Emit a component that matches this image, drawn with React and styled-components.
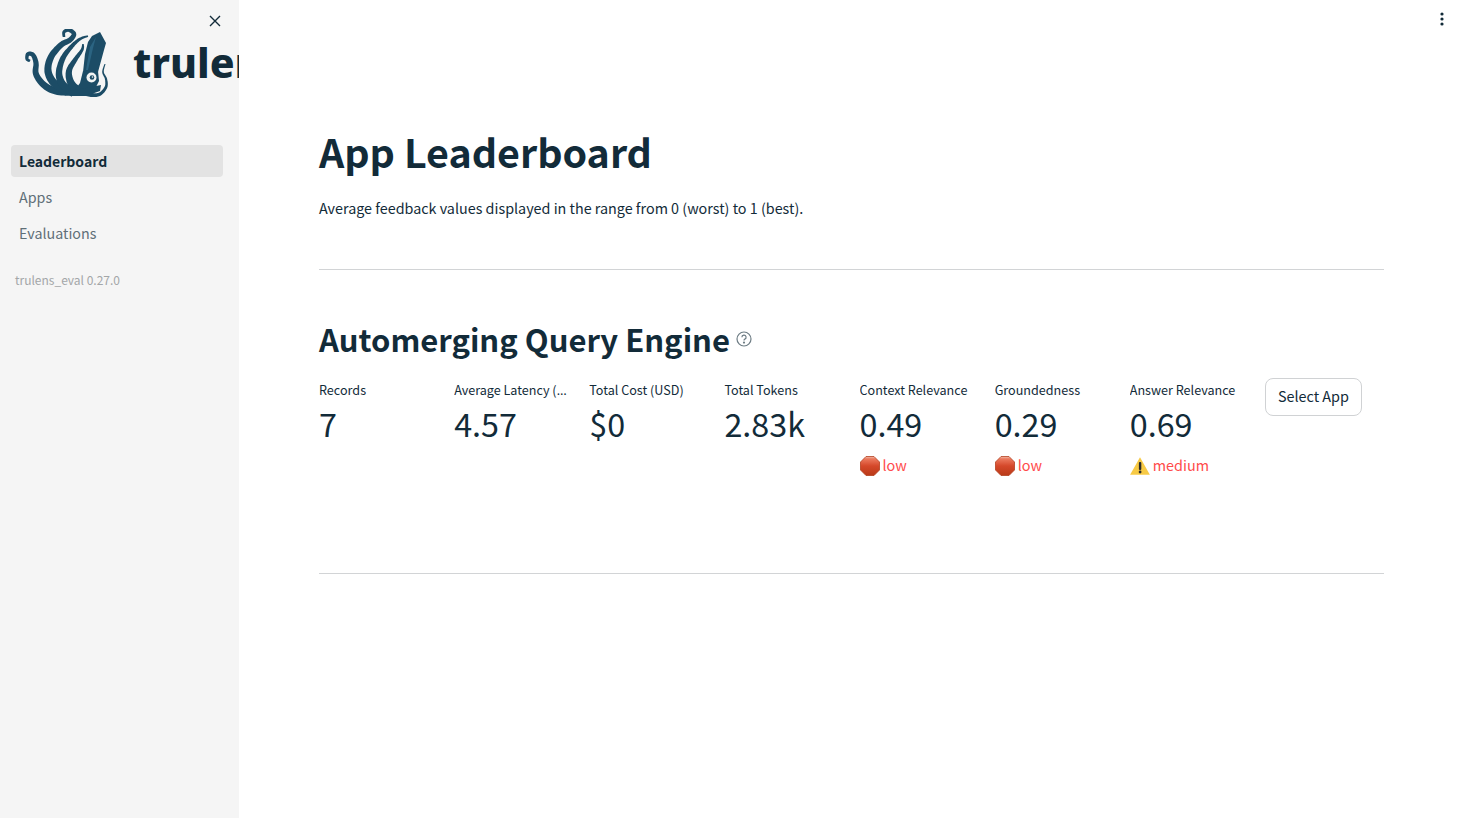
import { createGlobalStyle, styled } from "styled-components";

const FONT = `"Noto Sans CJK KR", "Noto Sans", sans-serif`;
const INK = "#122b39";

const Global = createGlobalStyle`
  html, body { margin: 0; padding: 0; height: 100%; background: #fff; }
  body { font-family: ${FONT}; color: ${INK}; overflow: hidden; }
  * { box-sizing: border-box; }
`;

const Page = styled.div`
  display: flex;
  height: 818px;
  width: 1458px;
`;

/* Sidebar */
const Sidebar = styled.aside`
  position: relative;
  width: 239px;
  flex: none;
  background: #f5f5f5;
  overflow: hidden;
`;
const CloseBtn = styled.button`
  position: absolute;
  top: 14px;
  left: 208px;
  width: 14px;
  height: 14px;
  padding: 0;
  border: 0;
  background: none;
  display: flex;
  color: ${INK};
`;
const Brand = styled.div`
  display: flex;
  align-items: center;
  height: 145px;
  padding: 0 0 15px 24px;
  white-space: nowrap;
  svg {
    flex: none;
  }
`;
const BrandName = styled.span`
  margin: 0 0 6px 19px;
  font-family: "Noto Sans", sans-serif;
  font-size: 41px;
  font-weight: 800;
  line-height: 1;
  color: ${INK};
`;
const Nav = styled.nav`
  display: flex;
  flex-direction: column;
  gap: 4px;
  padding: 0 16px 0 11px;
`;
const NavItem = styled.a`
  height: 32px;
  padding: 0 8px ${(p) => (p.$active ? 0 : 2)}px;
  border-radius: 4px;
  display: flex;
  align-items: center;
  font-size: ${(p) => (p.$active ? 14 : 14.3)}px;
  font-weight: ${(p) => (p.$active ? 700 : 400)};
  color: ${(p) => (p.$active ? INK : "#5f6f78")};
  background: ${(p) => (p.$active ? "#e3e3e3" : "transparent")};
`;
const Version = styled.div`
  margin: 22px 0 0 15px;
  font-size: 12px;
  line-height: 18px;
  color: #a3a6a8;
`;

/* Main */
const Main = styled.main`
  position: relative;
  flex: 1;
  padding: 122px 74px 0 80px;
`;
const MenuBtn = styled.button`
  position: absolute;
  top: 11px;
  right: 8px;
  width: 16px;
  height: 16px;
  padding: 0;
  border: 0;
  background: none;
  display: flex;
  color: ${INK};
`;
const Title = styled.h1`
  margin: 0;
  font-size: 39.4px;
  font-weight: 700;
  line-height: 58px;
`;
const Caption = styled.p`
  margin: 16px 0 0;
  font-size: 14.35px;
  line-height: 24px;
`;
const Rule = styled.hr`
  margin: ${(p) => p.$top}px 0 0;
  border: 0;
  border-top: 1px solid #d2d4d6;
`;
const AppTitle = styled.h2`
  display: flex;
  align-items: center;
  margin: 45px 0 0;
  font-size: 31px;
  font-weight: 700;
  line-height: 48px;
`;
const HelpIcon = styled.span`
  display: flex;
  margin: 0 0 0 6px;
  color: #6d7c84;
`;
const Metrics = styled.div`
  display: grid;
  grid-template-columns: repeat(8, 1fr);
  column-gap: 16px;
  margin-top: 15px;
`;
const Metric = styled.div`
  min-width: 0;
`;
/* the ellipsis takes the label's own font, so keep a baseline "…" there */
const MetricLabel = styled.div`
  font-family: "Noto Sans", sans-serif;
  font-size: 12.6px;
  line-height: 20px;
  padding-top: 2px;
  white-space: nowrap;
  overflow: hidden;
  text-overflow: ellipsis;
`;
const LabelText = styled.span`
  font-family: ${FONT};
`;
const MetricValue = styled.div`
  font-size: 32.3px;
  line-height: 48px;
  margin-top: -2px;
`;
const Delta = styled.div`
  display: flex;
  align-items: center;
  gap: 3px;
  height: 24px;
  margin-top: 5px;
  font-size: 14.4px;
  color: #ff4b4b;
  svg {
    margin-top: 3px;
  }
`;
const SelectBtn = styled.button`
  justify-self: start;
  height: 38px;
  padding: 0 12px 3px;
  border: 1px solid #d0d2d4;
  border-radius: 8px;
  background: #fff;
  font: 400 14.4px ${FONT};
  color: ${INK};
  white-space: nowrap;
`;

/* Turns a spline through pts into a filled shape that narrows from w0 to w1 */
function tentacle(pts, w0, w1) {
  const samples = [];
  for (let i = 0; i < pts.length - 1; i++) {
    const p0 = pts[Math.max(i - 1, 0)];
    const p1 = pts[i];
    const p2 = pts[i + 1];
    const p3 = pts[Math.min(i + 2, pts.length - 1)];
    for (let s = 0; s < 10; s++) {
      const t = s / 10;
      const f = (a, b, c, d) =>
        0.5 * (2 * b + (c - a) * t + (2 * a - 5 * b + 4 * c - d) * t * t + (3 * b - a - 3 * c + d) * t * t * t);
      samples.push([f(p0[0], p1[0], p2[0], p3[0]), f(p0[1], p1[1], p2[1], p3[1])]);
    }
  }
  samples.push(pts[pts.length - 1]);
  const left = [];
  const right = [];
  samples.forEach((p, i) => {
    const a = samples[Math.max(i - 1, 0)];
    const b = samples[Math.min(i + 1, samples.length - 1)];
    const len = Math.hypot(b[0] - a[0], b[1] - a[1]) || 1;
    const w = (w0 + (w1 - w0) * (i / (samples.length - 1))) / 2;
    const nx = (-(b[1] - a[1]) / len) * w;
    const ny = ((b[0] - a[0]) / len) * w;
    left.push(`${(p[0] + nx).toFixed(1)} ${(p[1] + ny).toFixed(1)}`);
    right.unshift(`${(p[0] - nx).toFixed(1)} ${(p[1] - ny).toFixed(1)}`);
  });
  return `M${left.join("L")}L${right.join("L")}Z`;
}

const ARMS = [
  { pts: [[54, 72], [36, 71], [24, 65], [16, 54], [16, 43], [13, 35], [8, 34], [7, 39], [10, 41]], w0: 8, w1: 2.5 },
  { pts: [[48, 72], [34, 63], [28, 51], [31, 37], [41, 25], [50, 20], [54, 14], [49, 10], [44, 12], [44, 17]], w0: 8.5, w1: 2.5 },
  { pts: [[54, 73], [43, 65], [39, 53], [43, 38], [52, 26], [60, 19], [68, 16]], w0: 9, w1: 1.5 },
  { pts: [[60, 73], [51, 63], [49, 51], [55, 40], [62, 30], [63, 24]], w0: 9, w1: 1.5 },
  { pts: [[62, 73], [72, 75], [80, 74], [86, 67], [86, 59], [83, 52], [85, 44]], w0: 4.5, w1: 1 },
];

const Squid = () => (
  <svg width="90" height="72" viewBox="4 9 90 72" fill="#1c4c66">
    {ARMS.map((a, i) => (
      <path key={i} d={tentacle(a.pts, a.w0, a.w1)} />
    ))}
    <path d="M80 12 L86 23 L84 30 L78 52 L63 52 L65 34 L68 22 L72 16 Z" />
    <path d="M76 17 L70 27 L66 50 L68 50 L73 28 Z" fill="#2b6482" />
    <path d="M63 51 L78 51 L79 61 L75 69 L68 74 L58 75 L54 71 L60 63 Z" />
    <path d="M48 71 L66 68 L81 65 L80 71 L66 76 L52 76 Z" />
    <circle cx="71.5" cy="57.5" r="5" fill="#f2f4f4" />
    <circle cx="72" cy="57.5" r="2.3" fill="#1c4c66" />
    <circle cx="72.5" cy="57" r="0.8" fill="#f2f4f4" />
  </svg>
);

const StopSign = () => (
  <svg width="20" height="20" viewBox="0 0 20 20">
    <defs>
      <linearGradient id="stop" x1="0" y1="0" x2="0" y2="1">
        <stop offset="0" stopColor="#f0c0b0" />
        <stop offset="0.12" stopColor="#ec7a5e" />
        <stop offset="0.5" stopColor="#d5482a" />
        <stop offset="1" stopColor="#b93a18" />
      </linearGradient>
    </defs>
    <path d="M6 .5 H14 L19.5 6 V14 L14 19.5 H6 L.5 14 V6 Z" fill="url(#stop)" stroke="#b4401f" strokeWidth="0.8" />
  </svg>
);

const WarnSign = () => (
  <svg width="20" height="18" viewBox="0 0 20 18">
    <path d="M10 .3 L19.9 17.7 H.1 Z" fill="#f7ca45" />
    <rect x="8.9" y="5" width="2.4" height="8" rx="1" fill="#2b2b2b" />
    <circle cx="10.1" cy="15" r="1.4" fill="#2b2b2b" />
  </svg>
);

const METRICS = [
  { label: "Records", value: "7" },
  { label: "Average Latency (Seconds)", value: "4.57" },
  { label: "Total Cost (USD)", value: "$0" },
  { label: "Total Tokens", value: "2.83k" },
  { label: "Context Relevance", value: "0.49", delta: "low" },
  { label: "Groundedness", value: "0.29", delta: "low" },
  { label: "Answer Relevance", value: "0.69", delta: "medium" },
];

export default function App() {
  return (
    <Page>
      <Global />
      <Sidebar>
        <CloseBtn aria-label="Close sidebar">
          <svg width="14" height="14" viewBox="0 0 14 14" fill="none" stroke="currentColor" strokeWidth="1.4">
            <path d="M2 2 L12 12 M12 2 L2 12" />
          </svg>
        </CloseBtn>
        <Brand>
          <Squid />
          <BrandName>trulens</BrandName>
        </Brand>
        <Nav>
          <NavItem $active>Leaderboard</NavItem>
          <NavItem>Apps</NavItem>
          <NavItem>Evaluations</NavItem>
        </Nav>
        <Version>trulens_eval 0.27.0</Version>
      </Sidebar>
      <Main>
        <MenuBtn aria-label="Menu">
          <svg width="16" height="16" viewBox="0 0 16 16" fill="currentColor">
            <circle cx="8" cy="3" r="1.6" />
            <circle cx="8" cy="8" r="1.6" />
            <circle cx="8" cy="13" r="1.6" />
          </svg>
        </MenuBtn>
        <Title>App Leaderboard</Title>
        <Caption>Average feedback values displayed in the range from 0 (worst) to 1 (best).</Caption>
        <Rule $top={49} />
        <AppTitle>
          Automerging Query Engine
          <HelpIcon>
            <svg width="16" height="16" viewBox="0 0 16 16" fill="none" stroke="currentColor" strokeWidth="1.2">
              <circle cx="8" cy="8" r="7" />
              <path d="M5.9 6.2 A2.1 2.1 0 1 1 8.9 8.1 C8.2 8.5 8 8.9 8 9.6" />
              <circle cx="8" cy="11.6" r="0.5" fill="currentColor" />
            </svg>
          </HelpIcon>
        </AppTitle>
        <Metrics>
          {METRICS.map((m) => (
            <Metric key={m.label}>
              <MetricLabel>
                <LabelText>{m.label}</LabelText>
              </MetricLabel>
              <MetricValue>{m.value}</MetricValue>
              {m.delta && (
                <Delta>
                  {m.delta === "low" ? <StopSign /> : <WarnSign />}
                  {m.delta}
                </Delta>
              )}
            </Metric>
          ))}
          <SelectBtn>Select App</SelectBtn>
        </Metrics>
        <Rule $top={97} />
      </Main>
    </Page>
  );
}
